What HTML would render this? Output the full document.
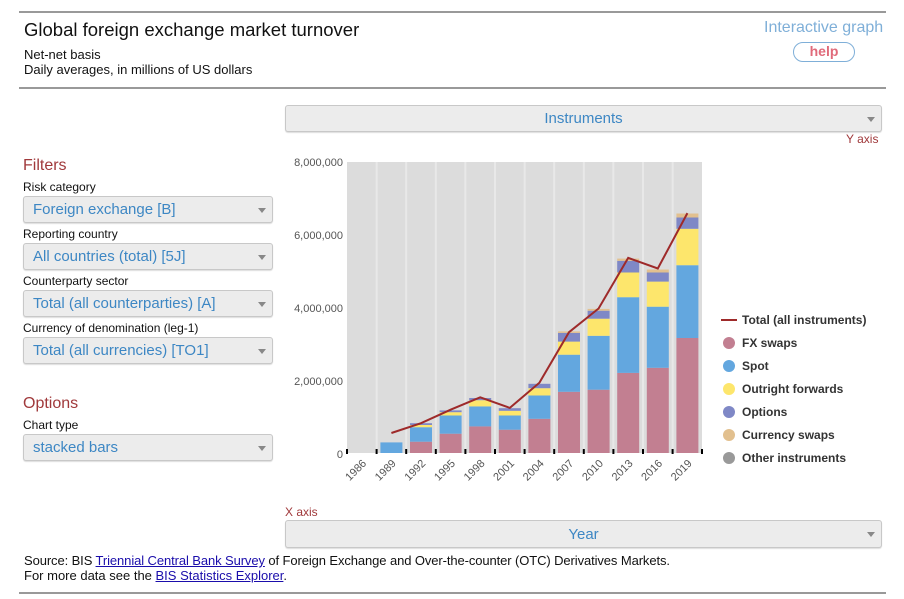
<!DOCTYPE html>
<html><head><meta charset="utf-8"><style>
body{margin:0;width:904px;height:599px;background:#fff;font-family:"Liberation Sans",Arial,sans-serif;position:relative;overflow:hidden}
.a{position:absolute;white-space:nowrap}
.rule{position:absolute;left:19px;width:867px;height:2px;background:#999}
.sel{position:absolute;border:1px solid #c8c8c8;border-radius:3px;background:#ececec;color:#3d87c4;box-sizing:border-box;box-shadow:0 1px 1px #ddd}
.sel:after{content:"";position:absolute;right:6px;top:50%;margin-top:-2px;border-left:4px solid transparent;border-right:4px solid transparent;border-top:5px solid #888}
.lsel{left:23px;width:250px;height:27px;font-size:15px;line-height:25px;padding-left:9px}
.lab{font-size:12px;color:#111}
.h{color:#a0393b;font-size:16px}
a{color:#1a0dab;text-decoration:underline}
</style></head><body>
<div class="rule" style="top:11px"></div>
<div class="a" style="left:24px;top:19px;font-size:18.5px;color:#111">Global foreign exchange market turnover</div>
<div class="a" style="left:24px;top:47px;font-size:13px;color:#111">Net-net basis</div>
<div class="a" style="left:24px;top:62px;font-size:13px;color:#111">Daily averages, in millions of US dollars</div>
<div class="a" style="left:764px;top:19px;font-size:16px;color:#7fafd8">Interactive graph</div>
<div class="a" style="left:793px;top:42px;width:60px;height:18px;border:1px solid #7fafd8;border-radius:10px;text-align:center;font-size:14px;font-weight:bold;color:#e06a7a;line-height:17px">help</div>
<div class="rule" style="top:87px"></div>
<div class="sel" style="left:285px;top:105px;width:597px;height:27px;text-align:center;font-size:15px;line-height:25px">Instruments</div>
<div class="a" style="left:846px;top:132px;font-size:12px;color:#a0393b">Y axis</div>

<div class="a h" style="left:23px;top:157px">Filters</div>
<div class="a lab" style="left:23px;top:180px">Risk category</div>
<div class="sel lsel" style="top:196px">Foreign exchange [B]</div>
<div class="a lab" style="left:23px;top:227px">Reporting country</div>
<div class="sel lsel" style="top:243px">All countries (total) [5J]</div>
<div class="a lab" style="left:23px;top:274px">Counterparty sector</div>
<div class="sel lsel" style="top:290px">Total (all counterparties) [A]</div>
<div class="a lab" style="left:23px;top:321px">Currency of denomination (leg-1)</div>
<div class="sel lsel" style="top:337px">Total (all currencies) [TO1]</div>
<div class="a h" style="left:23px;top:395px">Options</div>
<div class="a lab" style="left:23px;top:418px">Chart type</div>
<div class="sel lsel" style="top:434px">stacked bars</div>

<svg class="a" style="left:0;top:0" width="904" height="500" font-family="Liberation Sans,Arial,sans-serif">
<rect x="347" y="162" width="355" height="291" fill="#dcdcdc"/>
<g stroke="#e8e8e8" stroke-width="2">
<line x1="376.6" y1="162" x2="376.6" y2="453"/><line x1="406.2" y1="162" x2="406.2" y2="453"/><line x1="435.8" y1="162" x2="435.8" y2="453"/><line x1="465.4" y1="162" x2="465.4" y2="453"/><line x1="495" y1="162" x2="495" y2="453"/><line x1="524.6" y1="162" x2="524.6" y2="453"/><line x1="554.2" y1="162" x2="554.2" y2="453"/><line x1="583.8" y1="162" x2="583.8" y2="453"/><line x1="613.4" y1="162" x2="613.4" y2="453"/><line x1="643" y1="162" x2="643" y2="453"/><line x1="672.6" y1="162" x2="672.6" y2="453"/>
</g>
<g font-size="11" fill="#555" text-anchor="end">
<text x="343" y="166">8,000,000</text><text x="343" y="239">6,000,000</text><text x="343" y="312">4,000,000</text><text x="343" y="385">2,000,000</text><text x="343" y="458">0</text>
</g>
<g>
<rect x="380.4" y="442.4" width="22" height="10.6" fill="#63a7df"/>
<rect x="410" y="441.7" width="22" height="11.3" fill="#c27f91"/><rect x="410" y="427.2" width="22" height="14.5" fill="#63a7df"/><rect x="410" y="425" width="22" height="2.2" fill="#fde66c"/><rect x="410" y="423.2" width="22" height="1.8" fill="#7f88c6"/>
<rect x="439.6" y="433.7" width="22" height="19.3" fill="#c27f91"/><rect x="439.6" y="415.5" width="22" height="18.2" fill="#63a7df"/><rect x="439.6" y="412.2" width="22" height="3.3" fill="#fde66c"/><rect x="439.6" y="410.4" width="22" height="1.8" fill="#7f88c6"/>
<rect x="469.2" y="426.4" width="22" height="26.6" fill="#c27f91"/><rect x="469.2" y="406.4" width="22" height="20" fill="#63a7df"/><rect x="469.2" y="400.2" width="22" height="6.2" fill="#fde66c"/><rect x="469.2" y="398" width="22" height="2.2" fill="#7f88c6"/>
<rect x="498.8" y="429.7" width="22" height="23.3" fill="#c27f91"/><rect x="498.8" y="415.5" width="22" height="14.2" fill="#63a7df"/><rect x="498.8" y="410.8" width="22" height="4.7" fill="#fde66c"/><rect x="498.8" y="408.2" width="22" height="2.6" fill="#7f88c6"/>
<rect x="528.4" y="418.8" width="22" height="34.2" fill="#c27f91"/><rect x="528.4" y="395.5" width="22" height="23.3" fill="#63a7df"/><rect x="528.4" y="388.2" width="22" height="7.3" fill="#fde66c"/><rect x="528.4" y="383.8" width="22" height="4.4" fill="#7f88c6"/>
<rect x="558" y="391.8" width="22" height="61.2" fill="#c27f91"/><rect x="558" y="354.7" width="22" height="37.1" fill="#63a7df"/><rect x="558" y="341.6" width="22" height="13.1" fill="#fde66c"/><rect x="558" y="332.9" width="22" height="8.7" fill="#7f88c6"/><rect x="558" y="331.4" width="22" height="1.5" fill="#e2c08f"/>
<rect x="587.6" y="389.7" width="22" height="63.3" fill="#c27f91"/><rect x="587.6" y="335.8" width="22" height="53.9" fill="#63a7df"/><rect x="587.6" y="318.7" width="22" height="17.1" fill="#fde66c"/><rect x="587.6" y="310.7" width="22" height="8" fill="#7f88c6"/><rect x="587.6" y="308.9" width="22" height="1.8" fill="#e2c08f"/>
<rect x="617.2" y="372.9" width="22" height="80.1" fill="#c27f91"/><rect x="617.2" y="297.2" width="22" height="75.7" fill="#63a7df"/><rect x="617.2" y="272.5" width="22" height="24.7" fill="#fde66c"/><rect x="617.2" y="260.8" width="22" height="11.7" fill="#7f88c6"/><rect x="617.2" y="258.6" width="22" height="2.2" fill="#e2c08f"/>
<rect x="646.8" y="367.8" width="22" height="85.2" fill="#c27f91"/><rect x="646.8" y="306.7" width="22" height="61.1" fill="#63a7df"/><rect x="646.8" y="281.6" width="22" height="25.1" fill="#fde66c"/><rect x="646.8" y="272.5" width="22" height="9.1" fill="#7f88c6"/><rect x="646.8" y="269.5" width="22" height="3" fill="#e2c08f"/>
<rect x="676.4" y="338" width="22" height="115" fill="#c27f91"/><rect x="676.4" y="265.2" width="22" height="72.8" fill="#63a7df"/><rect x="676.4" y="228.8" width="22" height="36.4" fill="#fde66c"/><rect x="676.4" y="217.5" width="22" height="11.3" fill="#7f88c6"/><rect x="676.4" y="213.5" width="22" height="4" fill="#e2c08f"/>
</g>
<polyline points="391.4,433 421,423.2 450.6,409.7 480.2,397.3 509.8,407.9 539.4,382.7 569,332.2 598.6,308.5 628.2,257.9 657.8,268.5 687.4,213.1" fill="none" stroke="#9e2a2a" stroke-width="2"/>
<g fill="#000">
<rect x="346" y="449" width="2" height="5"/><rect x="375.6" y="449" width="2" height="5"/><rect x="405.2" y="449" width="2" height="5"/><rect x="434.8" y="449" width="2" height="5"/><rect x="464.4" y="449" width="2" height="5"/><rect x="494" y="449" width="2" height="5"/><rect x="523.6" y="449" width="2" height="5"/><rect x="553.2" y="449" width="2" height="5"/><rect x="582.8" y="449" width="2" height="5"/><rect x="612.4" y="449" width="2" height="5"/><rect x="642" y="449" width="2" height="5"/><rect x="671.6" y="449" width="2" height="5"/><rect x="701" y="449" width="2" height="5"/>
</g>
<g font-size="11" fill="#555" text-anchor="end">
<text transform="translate(367,464) rotate(-45)">1986</text><text transform="translate(396.6,464) rotate(-45)">1989</text><text transform="translate(426.2,464) rotate(-45)">1992</text><text transform="translate(455.8,464) rotate(-45)">1995</text><text transform="translate(485.4,464) rotate(-45)">1998</text><text transform="translate(515,464) rotate(-45)">2001</text><text transform="translate(544.6,464) rotate(-45)">2004</text><text transform="translate(574.2,464) rotate(-45)">2007</text><text transform="translate(603.8,464) rotate(-45)">2010</text><text transform="translate(633.4,464) rotate(-45)">2013</text><text transform="translate(663,464) rotate(-45)">2016</text><text transform="translate(692.6,464) rotate(-45)">2019</text>
</g>
<g font-size="12" font-weight="bold" fill="#333">
<line x1="721" y1="320" x2="737" y2="320" stroke="#9e2a2a" stroke-width="2"/><text x="742" y="324">Total (all instruments)</text>
<circle cx="729" cy="343" r="6" fill="#c27f91"/><text x="742" y="347">FX swaps</text>
<circle cx="729" cy="366" r="6" fill="#63a7df"/><text x="742" y="370">Spot</text>
<circle cx="729" cy="389" r="6" fill="#fde66c"/><text x="742" y="393">Outright forwards</text>
<circle cx="729" cy="412" r="6" fill="#7f88c6"/><text x="742" y="416">Options</text>
<circle cx="729" cy="435" r="6" fill="#e2c08f"/><text x="742" y="439">Currency swaps</text>
<circle cx="729" cy="458" r="6" fill="#999"/><text x="742" y="462">Other instruments</text>
</g>
</svg>

<div class="a" style="left:285px;top:505px;font-size:12px;color:#a0393b">X axis</div>
<div class="sel" style="left:285px;top:520px;width:597px;height:28px;text-align:center;font-size:15px;line-height:27px">Year</div>
<div class="a" style="left:24px;top:553px;font-size:13px;color:#111;letter-spacing:-0.1px">Source: BIS <a>Triennial Central Bank Survey</a> of Foreign Exchange and Over-the-counter (OTC) Derivatives Markets.</div>
<div class="a" style="left:24px;top:568px;font-size:13px;color:#111">For more data see the <a>BIS Statistics Explorer</a>.</div>
<div class="rule" style="top:592px"></div>
</body></html>
